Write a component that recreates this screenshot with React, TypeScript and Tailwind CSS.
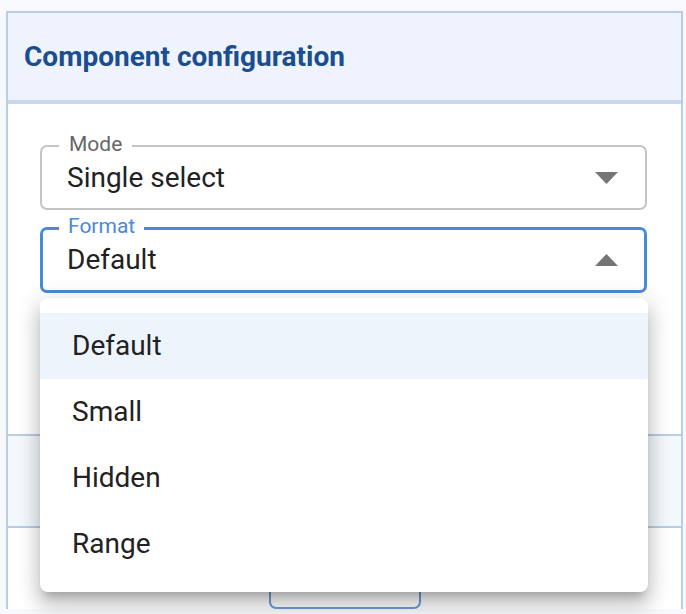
import React from "react";

const formats = ["Default", "Small", "Hidden", "Range"];

const Caret = ({ up }: { up?: boolean }) => (
  <svg width="23" height="12" viewBox="0 0 23 12" className="shrink-0">
    <polygon
      points={up ? "0,12 23,12 11.5,0" : "0,0 23,0 11.5,12"}
      fill="#757575"
    />
  </svg>
);

const App = () => {
  return (
    <div
      className="min-h-[614px] bg-[#f8f9fc] pl-[6px] pt-[11px]"
      style={{ fontFamily: "Roboto, 'Liberation Sans', sans-serif" }}
    >
      <div className="relative w-[677px] border-2 border-b-0 border-[#b8cde6] bg-white">
        {/* header */}
        <div className="flex h-[91px] items-center border-b-4 border-[#c9d8ef] bg-[#eef3fd] pl-[16px]">
          <h2 className="text-[28px] font-bold text-[#1c4e8f]">
            Component configuration
          </h2>
        </div>

        {/* fields */}
        <div className="flex flex-col gap-[17px] pb-[141px] pl-[32px] pr-[34px] pt-[41px]">
          <div className="relative flex h-[65px] items-center justify-between rounded-[7px] border-2 border-[#c4c4c4] pl-[25px] pr-[27px]">
            <span className="absolute left-[17px] top-[-13px] bg-white px-[10px] text-[21px] leading-[20px] text-[#666]">
              Mode
            </span>
            <span className="text-[28px] text-[#222]">Single select</span>
            <Caret />
          </div>

          <div className="relative flex h-[66px] items-center justify-between rounded-[7px] border-[3px] border-[#4a89d6] pl-[24px] pr-[26px]">
            <span className="absolute left-[16px] top-[-14px] bg-white px-[9px] text-[21px] leading-[20px] text-[#4a89d6]">
              Format
            </span>
            <span className="text-[28px] text-[#222]">Default</span>
            <Caret up />
          </div>
        </div>

        {/* section row behind the menu */}
        <div className="h-[94px] border-y-2 border-[#b8cde6] bg-[#f5f8fd]" />

        <div className="flex justify-center pt-[31px]">
          <div className="h-[50px] w-[152px] rounded-[7px] border-2 border-[#6e9ed6]" />
        </div>

        {/* open dropdown */}
        <div className="absolute left-[32px] top-[285px] w-[608px] rounded-[8px] bg-white py-[15px] shadow-[0_8px_9px_-5px_rgba(0,0,0,0.2),0_14px_17px_2px_rgba(0,0,0,0.14),0_5px_24px_4px_rgba(0,0,0,0.12)]">
          {formats.map((f, i) => (
            <div
              key={f}
              className={`flex h-[66px] items-center pl-[32px] text-[28px] text-[#222] ${
                i === 0 ? "bg-[#eef4fc]" : ""
              }`}
            >
              {f}
            </div>
          ))}
        </div>
      </div>
    </div>
  );
};

export default App;
